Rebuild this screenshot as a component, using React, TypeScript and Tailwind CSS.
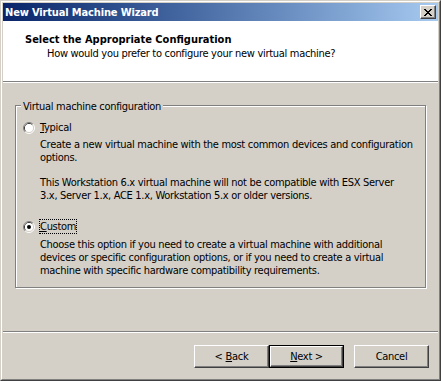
import type { ReactNode } from 'react'

const font = "font-['DejaVu_Sans_Condensed','Liberation_Sans',sans-serif]"

function Radio({ checked }: { checked?: boolean }) {
  return (
    <svg width="12" height="12" viewBox="0 0 12 12" className="shrink-0">
      <path d="M2.11 9.89 A5.5 5.5 0 0 1 9.89 2.11" fill="none" stroke="#808080" strokeWidth="1" />
      <path d="M9.89 2.11 A5.5 5.5 0 0 1 2.11 9.89" fill="none" stroke="#ffffff" strokeWidth="1" />
      <path d="M2.82 9.18 A4.5 4.5 0 0 1 9.18 2.82" fill="none" stroke="#404040" strokeWidth="1" />
      <path d="M9.18 2.82 A4.5 4.5 0 0 1 2.82 9.18" fill="none" stroke="#d4d0c8" strokeWidth="1" />
      <circle cx="6" cy="6" r="4" fill="#ffffff" />
      {checked && <circle cx="6" cy="6" r="2" fill="#000000" />}
    </svg>
  )
}

function CloseGlyph() {
  const px: [number, number, number][] = [
    [0, 0, 2], [6, 0, 2],
    [1, 1, 2], [5, 1, 2],
    [2, 2, 4],
    [3, 3, 2],
    [2, 4, 4],
    [1, 5, 2], [5, 5, 2],
    [0, 6, 2], [6, 6, 2],
  ]
  return (
    <svg width="8" height="7" viewBox="0 0 8 7" shapeRendering="crispEdges">
      {px.map(([x, y, w], i) => (
        <rect key={i} x={x} y={y} width={w} height={1} fill="#000" />
      ))}
    </svg>
  )
}

function Button({ children, isDefault }: { children: ReactNode; isDefault?: boolean }) {
  return (
    <button
      type="button"
      className={
        isDefault
          ? 'w-[75px] h-[23px] border border-black bg-[#d4d0c8]'
          : 'w-[75px] h-[23px] bg-[#d4d0c8]'
      }
    >
      <div className="w-full h-full flex items-center justify-center border border-t-white border-l-white border-r-[#404040] border-b-[#404040] shadow-[inset_-1px_-1px_0_#808080]">
        {children}
      </div>
    </button>
  )
}

export default function App() {
  return (
    <div
      className={`w-[441px] h-[381px] bg-[#d4d0c8] border border-t-[#d4d0c8] border-l-[#d4d0c8] border-r-[#404040] border-b-[#404040] text-[11px] leading-[13px] tracking-[-0.3px] text-black ${font}`}
    >
      <div className="h-full border border-t-white border-l-white border-r-[#808080] border-b-[#808080] p-px flex flex-col">
        {/* Title bar */}
        <div className="h-[18px] shrink-0 flex items-center justify-between bg-gradient-to-r from-[#0a246a] to-[#a6caf0] pl-[2px] pr-[2px]">
          <span className="text-white font-bold tracking-[-0.15px]">New Virtual Machine Wizard</span>
          <div className="w-[16px] h-[14px] flex items-center justify-center bg-[#d4d0c8] border border-t-white border-l-white border-r-[#404040] border-b-[#404040] shadow-[inset_-1px_-1px_0_#808080]">
            <CloseGlyph />
          </div>
        </div>

        {/* Header */}
        <div className="h-[60px] shrink-0 bg-white pt-[12px] pl-[22px]">
          <div className="font-bold tracking-normal">Select the Appropriate Configuration</div>
          <div className="mt-px pl-[22px]">How would you prefer to configure your new virtual machine?</div>
        </div>
        <div className="h-px bg-[#808080] shrink-0" />
        <div className="h-px bg-white shrink-0" />

        {/* Body */}
        <div className="flex-1 flex flex-col">
          <div className="relative mt-[22px] ml-[12px] w-[411px] border border-[#808080] shadow-[inset_1px_1px_0_#fff,1px_1px_0_#fff] pt-[15px] pb-[10px] pl-[7px]">
            <span className="absolute -top-[6px] left-[5px] px-[2px] bg-[#d4d0c8]">
              Virtual machine configuration
            </span>

            {/* Typical */}
            <div className="flex items-center">
              <Radio />
              <span className="ml-[5px]">
                <u className="underline-offset-[1px]">T</u>ypical
              </span>
            </div>
            <div className="pl-[17px] mt-[4px] whitespace-nowrap">
              Create a new virtual machine with the most common devices and configuration
              <br />
              options.
            </div>
            <div className="pl-[17px] mt-[12px] whitespace-nowrap">
              This Workstation 6.x virtual machine will not be compatible with ESX Server
              <br />
              3.x, Server 1.x, ACE 1.x, Workstation 5.x or older versions.
            </div>

            {/* Custom */}
            <div className="flex items-center mt-[17px]">
              <Radio checked />
              <span className="ml-[4px] border border-dotted border-black">
                <u className="underline-offset-[1px]">C</u>ustom
              </span>
            </div>
            <div className="pl-[17px] mt-[4px] whitespace-nowrap">
              Choose this option if you need to create a virtual machine with additional
              <br />
              devices or specific configuration options, or if you need to create a virtual
              <br />
              machine with specific hardware compatibility requirements.
            </div>
          </div>

          {/* Footer */}
          <div className="mt-auto">
            <div className="h-px bg-[#808080]" />
            <div className="h-px bg-white" />
            <div className="flex justify-end pt-[12px] pb-[10px] pr-[9px]">
              <Button>
                &lt; <u className="underline-offset-[1px] ml-[3px]">B</u>ack
              </Button>
              <Button isDefault>
                <u className="underline-offset-[1px]">N</u>ext &gt;
              </Button>
              <div className="ml-[10px]">
                <Button>Cancel</Button>
              </div>
            </div>
          </div>
        </div>
      </div>
    </div>
  )
}
